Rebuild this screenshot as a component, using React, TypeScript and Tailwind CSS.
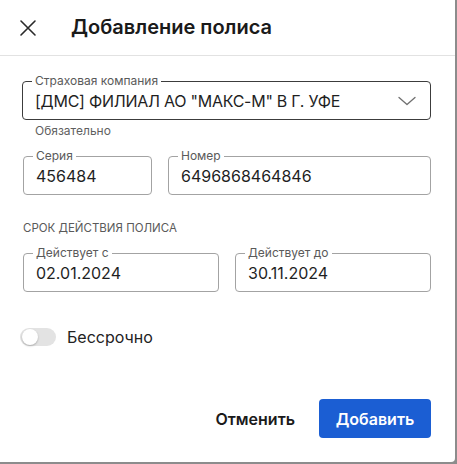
import { ReactNode } from 'react';

function Field({
  label,
  value,
  dark,
  className,
  valueClassName,
  children,
}: {
  label: string;
  value: string;
  dark?: boolean;
  className?: string;
  valueClassName?: string;
  children?: ReactNode;
}) {
  return (
    <div
      className={`relative h-[39px] rounded-[4px] border ${
        dark ? 'border-[#3c3c3c]' : 'border-[#a3a3a3]'
      } ${className ?? ''}`}
    >
      <span className="absolute left-[9px] top-[-8px] bg-white px-[3px] text-[12px] leading-[14px] text-[#5a5a5a]">
        {label}
      </span>
      <div className="flex items-center pl-[12px] pr-[14px] pt-[7px]">
        <span className={`flex-1 text-[16px] leading-[24px] text-[#1f1f1f] ${valueClassName ?? ''}`}>
          {value}
        </span>
        {children}
      </div>
    </div>
  );
}

export default function App() {
  return (
    <div className="w-[457px] h-[464px] bg-[#8c8c8c] font-['Inter',sans-serif]">
      <div className="w-[455px] h-[462px] bg-white rounded-br-[4px] flex flex-col">
        {/* Header */}
        <div className="h-[56px] flex items-center border-b border-[#e2e2e2]">
          <div className="w-[71px] pl-[19px]">
            <svg
              aria-hidden="true"
              className="w-[18px] h-[18px] text-[#2a2a2a]"
              viewBox="0 0 18 18"
              fill="none"
              stroke="currentColor"
            >
              <path strokeWidth={1.6} strokeLinecap="round" d="M2 2l14 14M16 2L2 16" />
            </svg>
          </div>
          <h2 className="text-[20px] font-semibold text-[#1a1a1a] leading-[24px] pb-[1px]">
            Добавление полиса
          </h2>
        </div>

        {/* Body */}
        <div className="pl-[22px] pr-[24px] pt-[25px] flex-1 flex flex-col">
          <Field
            label="Страховая компания"
            value={'[ДМС] ФИЛИАЛ АО "МАКС-М" В Г. УФЕ'}
            valueClassName="tracking-[-0.25px]"
            dark
          >
            <svg
              aria-hidden="true"
              className="w-[18px] h-[10px] text-[#6f6f6f]"
              viewBox="0 0 18 10"
              fill="none"
              stroke="currentColor"
            >
              <path strokeWidth={1.3} strokeLinecap="round" strokeLinejoin="round" d="M1 1.5l8 7 8-7" />
            </svg>
          </Field>
          <p className="pl-[13px] mt-[3px] text-[12px] leading-[16px] text-[#5f5f5f]">Обязательно</p>

          <div className="mt-[17px] flex gap-[16px] pl-[1px]">
            <Field label="Серия" value="456484" className="w-[129px]" />
            <Field label="Номер" value="6496868464846" className="flex-1" />
          </div>

          <p className="mt-[26px] pl-[1px] text-[11.5px] leading-[14px] text-[#5a5a5a] uppercase">
            Срок действия полиса
          </p>

          <div className="mt-[18px] flex gap-[16px] pl-[1px]">
            <Field label="Действует с" value="02.01.2024" className="flex-1" />
            <Field label="Действует до" value="30.11.2024" className="flex-1" />
          </div>

          <div className="mt-[35px] flex items-center gap-[11px] -ml-[2px]">
            <div className="relative w-[36px] h-[18px] rounded-full bg-[#e3e3e3]">
              <span className="absolute left-[2px] top-[1px] w-[16px] h-[16px] rounded-full bg-white shadow-[0_1px_2px_rgba(0,0,0,0.25)]" />
            </div>
            <span className="text-[16px] leading-[20px] text-[#222]">Бессрочно</span>
          </div>

          {/* Footer */}
          <div className="mt-auto mb-[24px] flex justify-end items-center gap-[24px]">
            <button type="button" className="text-[16px] font-semibold text-[#1a1a1a]">
              Отменить
            </button>
            <button
              type="button"
              className="w-[112px] h-[39px] rounded-[4px] bg-[#1b5ed3] text-white text-[16px] font-semibold"
            >
              Добавить
            </button>
          </div>
        </div>
      </div>
    </div>
  );
}
